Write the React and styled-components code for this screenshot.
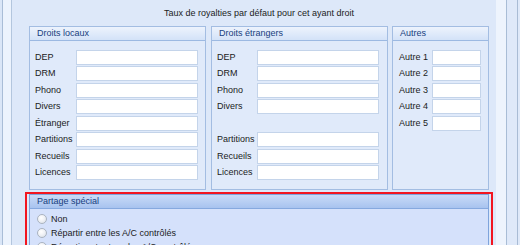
import React from "react";
import styled, { createGlobalStyle } from "styled-components";

const Global = createGlobalStyle`
  html, body { margin: 0; padding: 0; background: #dde8f8; }
  body { font-family: "Liberation Sans", Arial, sans-serif; font-size: 9px; color: #1b1b1b; }
`;

const Page = styled.div`
  display: flex;
  width: 520px;
  height: 245px;
  overflow: hidden;
`;

const Strip = styled.div`
  flex: 0 0 ${(p) => p.$w}px;
  background: ${(p) => p.$bg};
`;

const Content = styled.div`
  flex: 0 0 484px;
  background: #dde8f9;
  display: flex;
  flex-direction: column;
  padding: 0 7px 0 17px;
  box-sizing: border-box;
  overflow: hidden;
  & > * { flex-shrink: 0; }
`;

const Title = styled.div`
  height: 26px;
  line-height: 26px;
  text-align: center;
  color: #1b1b1b;
`;

const GroupRow = styled.div`
  display: flex;
  height: 164px;
`;

const Group = styled.div`
  flex: 0 0 ${(p) => p.$w}px;
  margin-right: ${(p) => p.$mr || 0}px;
  box-sizing: border-box;
  border: 1px solid #a3bde2;
  background: #e0eafa;
  display: flex;
  flex-direction: column;
`;

const GroupHeader = styled.div`
  height: 13px;
  line-height: 13px;
  padding-left: 7px;
  color: #17407e;
  background: linear-gradient(#edf3fd, #d3e2f8);
  border-bottom: 1px solid #9cb9e2;
`;

const GroupBody = styled.div`
  padding: 9px 0 0 ${(p) => p.$pl}px;
  display: grid;
  grid-template-columns: ${(p) => p.$lw}px ${(p) => p.$iw}px;
  grid-auto-rows: 16.43px;
  align-items: start;
`;

const Label = styled.div`
  height: 15px;
  line-height: 15px;
  white-space: nowrap;
`;

const Field = styled.div`
  height: 15px;
  box-sizing: border-box;
  border: 1px solid #c4d4ea;
  background: #ffffff;
`;

const Spacer = styled.div`
  grid-column: 1 / span 2;
`;

const Highlighted = styled.div`
  position: relative;
  margin-top: 4px;
  box-sizing: border-box;
  width: 460px;
  border: 1px solid #7fa4dc;
  background: #d5e1fb;
  &::after {
    content: "";
    position: absolute;
    left: -5px;
    right: -5px;
    top: -3px;
    bottom: -40px;
    border: 2px solid #f21620;
    pointer-events: none;
  }
`;

const SpecialHeader = styled.div`
  height: 13px;
  line-height: 13px;
  padding-left: 7px;
  color: #17407e;
  background: linear-gradient(#c9dbf7, #a8c3ef);
  border-bottom: 1px solid #86a9df;
`;

const RadioList = styled.div`
  display: flex;
  flex-direction: column;
  padding: 3px 0 0 7px;
`;

const RadioRow = styled.label`
  display: flex;
  align-items: center;
  gap: 4px;
  height: 14px;
`;

const Radio = styled.span`
  width: 10px;
  height: 10px;
  box-sizing: border-box;
  border-radius: 50%;
  border: 1px solid #aab3c0;
  background: radial-gradient(circle at 40% 35%, #ffffff 0%, #f0f2f6 45%, #d6dce4 100%);
`;

const local = ["DEP", "DRM", "Phono", "Divers", "Étranger", "Partitions", "Recueils", "Licences"];
const foreign = ["DEP", "DRM", "Phono", "Divers", null, "Partitions", "Recueils", "Licences"];
const others = ["Autre 1", "Autre 2", "Autre 3", "Autre 4", "Autre 5"];

function Rows({ items }) {
  return items.map((l, i) =>
    l === null ? (
      <Spacer key={i} />
    ) : (
      <React.Fragment key={i}>
        <Label>{l}</Label>
        <Field />
      </React.Fragment>
    )
  );
}

export default function App() {
  return (
    <>
      <Global />
      <Page>
        <Strip $w={2} $bg="#dae6f7" />
        <Strip $w={1} $bg="#a9bdd7" />
        <Strip $w={8} $bg="#ecf3fd" />
        <Strip $w={1} $bg="#b3c6de" />
        <Content>
          <Title>Taux de royalties par défaut pour cet ayant droit</Title>
          <GroupRow>
            <Group $w={177} $mr={5}>
              <GroupHeader>Droits locaux</GroupHeader>
              <GroupBody $pl={5} $lw={41} $iw={122}>
                <Rows items={local} />
              </GroupBody>
            </Group>
            <Group $w={177} $mr={4}>
              <GroupHeader>Droits étrangers</GroupHeader>
              <GroupBody $pl={5} $lw={40} $iw={122}>
                <Rows items={foreign} />
              </GroupBody>
            </Group>
            <Group $w={97}>
              <GroupHeader>Autres</GroupHeader>
              <GroupBody $pl={6} $lw={33} $iw={49}>
                <Rows items={others} />
              </GroupBody>
            </Group>
          </GroupRow>
          <Highlighted>
            <SpecialHeader>Partage spécial</SpecialHeader>
            <RadioList>
              <RadioRow><Radio />Non</RadioRow>
              <RadioRow><Radio />Répartir entre les A/C contrôlés</RadioRow>
              <RadioRow><Radio />Répartir entre tous les A/C contrôlés</RadioRow>
            </RadioList>
          </Highlighted>
        </Content>
        <Strip $w={10} $bg="#eef4fd" />
        <Strip $w={1} $bg="#a9bdd6" />
        <Strip $w={10} $bg="#dfe9f9" />
        <Strip $w={1} $bg="#a9bcd5" />
        <Strip $w={2} $bg="#dfe9f9" />
      </Page>
    </>
  );
}
